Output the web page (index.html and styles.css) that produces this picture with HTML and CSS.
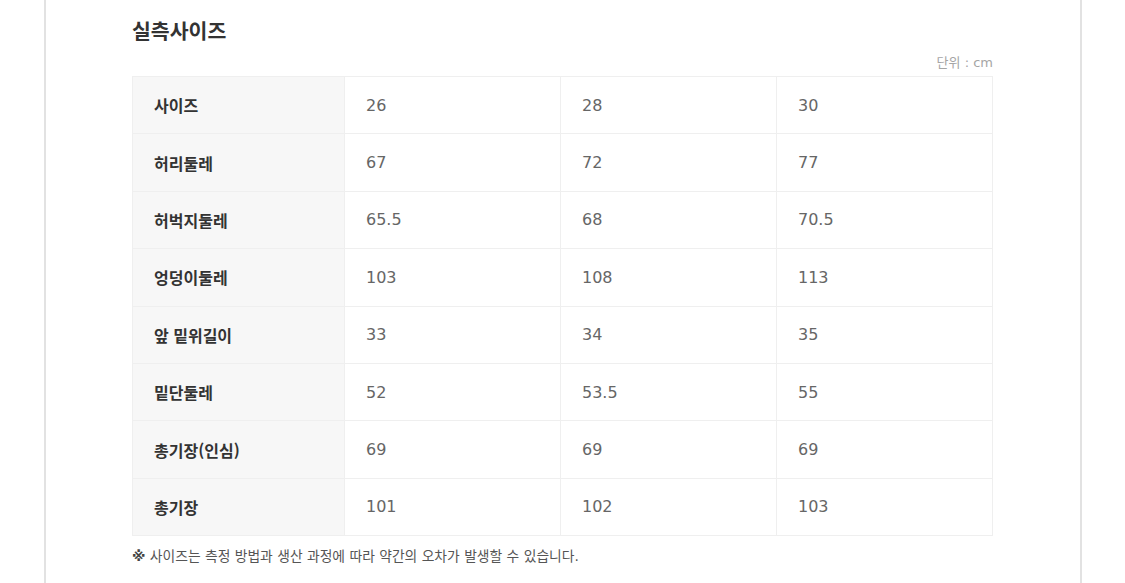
FILE: index.html
```html
<!DOCTYPE html>
<html lang="ko">
<head>
<meta charset="utf-8">
<link rel="stylesheet" href="styles.css">
</head>
<body>
<div class="page">
  <h2 class="title">실측사이즈</h2>
  <div class="unit">단위 : cm</div>
  <table class="size-table">
    <colgroup>
      <col class="c-head"><col class="c-val"><col class="c-val"><col class="c-val">
    </colgroup>
    <tbody>
      <tr><th>사이즈</th><td>26</td><td>28</td><td>30</td></tr>
      <tr><th>허리둘레</th><td>67</td><td>72</td><td>77</td></tr>
      <tr><th>허벅지둘레</th><td>65.5</td><td>68</td><td>70.5</td></tr>
      <tr><th>엉덩이둘레</th><td>103</td><td>108</td><td>113</td></tr>
      <tr><th>앞 밑위길이</th><td>33</td><td>34</td><td>35</td></tr>
      <tr><th>밑단둘레</th><td>52</td><td>53.5</td><td>55</td></tr>
      <tr><th>총기장(인심)</th><td>69</td><td>69</td><td>69</td></tr>
      <tr><th>총기장</th><td>101</td><td>102</td><td>103</td></tr>
    </tbody>
  </table>
  <p class="note"><span class="mark">※</span> 사이즈는 측정 방법과 생산 과정에 따라 약간의 오차가 발생할 수 있습니다.</p>
</div>
</body>
</html>
```

FILE: styles.css
```css
html, body {
  margin: 0;
  padding: 0;
  background: #fff;
}
body {
  font-family: "Noto Sans", "Noto Sans CJK KR", sans-serif;
  color: #333;
}
.page {
  box-sizing: border-box;
  margin-left: 44px;
  width: 1038px;
  min-height: 583px;
  border-left: 2px solid #e2e2e2;
  border-right: 2px solid #e2e2e2;
  padding: 16px 87px 0 86px;
}
.title {
  margin: 0;
  font-family: "Noto Sans CJK KR", sans-serif;
  font-size: 20.5px;
  line-height: 28px;
  font-weight: 700;
  color: #333;
}
.unit {
  margin-top: 11px;
  text-align: right;
  font-family: "DejaVu Sans", "Noto Sans CJK KR", sans-serif;
  font-size: 13px;
  line-height: 16px;
  color: #a5a5a5;
}
.size-table {
  margin-top: 5px;
  width: 861px;
  border-collapse: collapse;
  table-layout: fixed;
}
.c-head { width: 212px; }
.size-table th,
.size-table td {
  border: 1px solid #efefef;
  height: 56.4px;
  padding: 0 0 0 21px;
  text-align: left;
  font-size: 16px;
  vertical-align: middle;
}
.size-table th {
  background: #f7f7f7;
  font-family: "Noto Sans CJK KR", sans-serif;
  font-weight: 700;
  color: #333;
}
.size-table td {
  font-family: "DejaVu Sans", "Noto Sans CJK KR", sans-serif;
  color: #666;
  font-weight: 400;
}
.note {
  margin: 11px 0 0;
  font-family: "DejaVu Sans", "Noto Sans CJK KR", sans-serif;
  font-size: 13.8px;
  line-height: 18px;
  color: #555;
}
.mark {
  font-weight: 700;
  color: #444;
}
```
